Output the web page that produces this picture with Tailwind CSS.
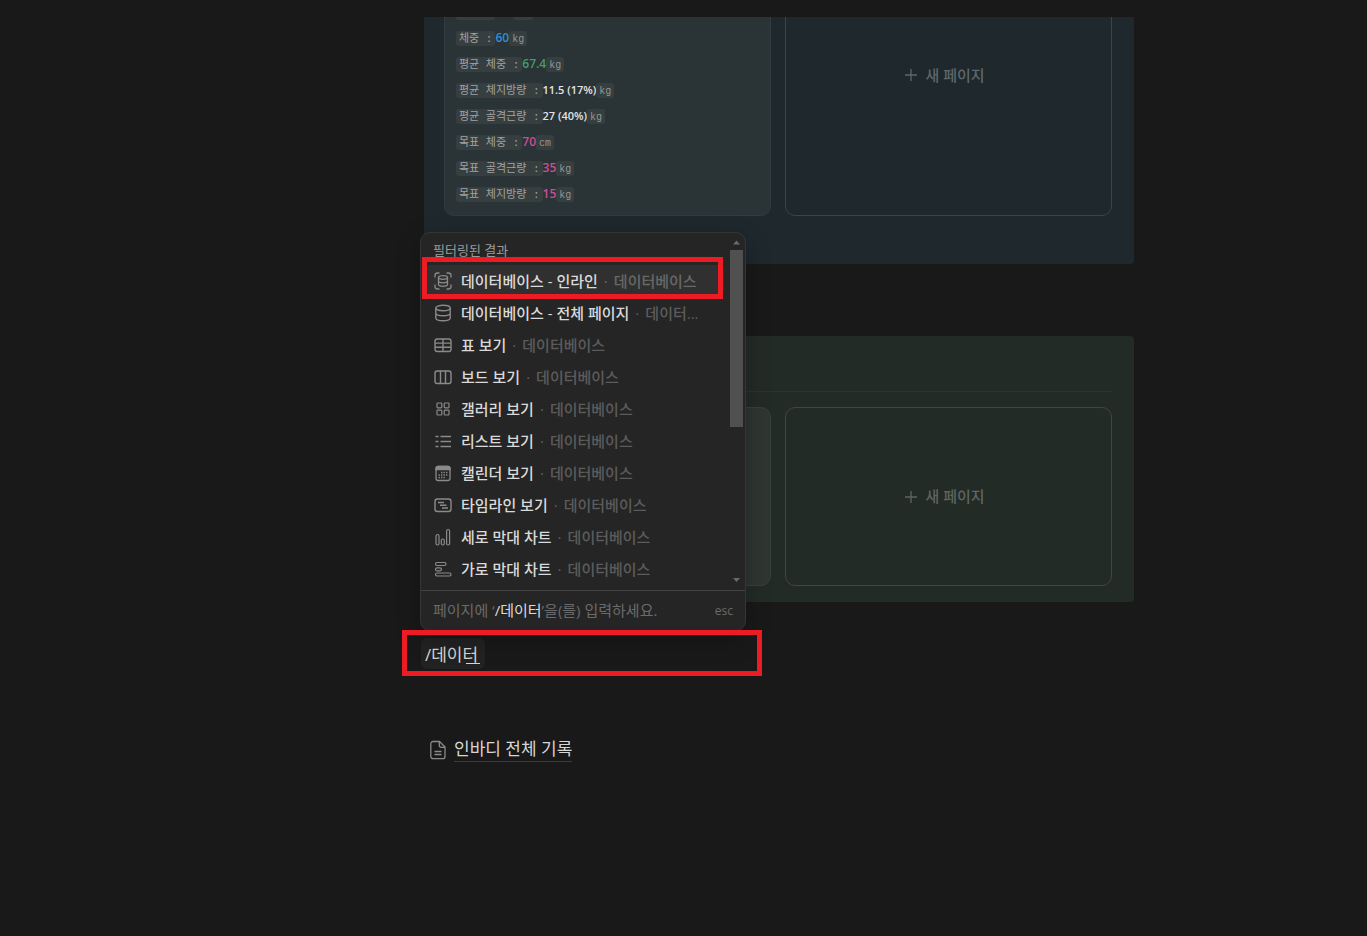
<!DOCTYPE html>
<html lang="ko">
<head>
<meta charset="utf-8">
<meta name="viewport" content="width=device-width, initial-scale=1">
<title>인바디 기록</title>
<script src="https://cdn.jsdelivr.net/npm/@tailwindcss/browser@4"></script>
</head>
<body class="min-h-screen bg-[#191919] font-['Open_Sans','Noto_Sans_CJK_KR',sans-serif] text-[#d6d6d6]">
<main class="pt-[17px] pr-[233px] pl-[424px]">

  <section class="overflow-hidden rounded-b-sm bg-[#1e282d] pr-[22px] pb-12 pl-5">
    <div class="-mt-[83px] grid h-[282px] grid-cols-2 gap-3.5">
      <article class="flex flex-col justify-end rounded-[10px] border border-[#323c40] bg-[#2a3437] px-[11px] pb-2 text-[12px] font-semibold">
        <div class="flex h-[26px] items-center"><span class="h-[15px] w-[39px] rounded-[3px] bg-[#363e40]"></span><span class="w-[18px]"></span><span class="h-[15px] w-5 rounded-[3px] bg-[#363e40]"></span></div>
        <div class="flex h-[26px] items-center whitespace-nowrap"><code class="h-[15px] rounded-[3px] bg-[#363e40] px-[3px] font-['Liberation_Mono','Noto_Sans_CJK_KR',monospace] text-[11px] leading-[17px] font-normal text-[#a0a3a3]">체중 :</code><span class="text-[#2f8fd0]">60</span><code class="h-[15px] rounded-[3px] bg-[#363e40] px-[3px] font-['Liberation_Mono',monospace] text-[10px] leading-[17px] font-normal text-[#929696]">kg</code></div>
        <div class="flex h-[26px] items-center whitespace-nowrap"><code class="h-[15px] rounded-[3px] bg-[#363e40] px-[3px] font-['Liberation_Mono','Noto_Sans_CJK_KR',monospace] text-[11px] leading-[17px] font-normal text-[#a0a3a3]">평균 체중 :</code><span class="text-[#469a69]">67.4</span><code class="h-[15px] rounded-[3px] bg-[#363e40] px-[3px] font-['Liberation_Mono',monospace] text-[10px] leading-[17px] font-normal text-[#929696]">kg</code></div>
        <div class="flex h-[26px] items-center whitespace-nowrap"><code class="h-[15px] rounded-[3px] bg-[#363e40] px-[3px] font-['Liberation_Mono','Noto_Sans_CJK_KR',monospace] text-[11px] leading-[17px] font-normal text-[#a0a3a3]">평균 체지방량 :</code><span class="text-[11px] text-[#e2e4e4]">11.5 (17%)</span><code class="h-[15px] rounded-[3px] bg-[#363e40] px-[3px] font-['Liberation_Mono',monospace] text-[10px] leading-[17px] font-normal text-[#929696]">kg</code></div>
        <div class="flex h-[26px] items-center whitespace-nowrap"><code class="h-[15px] rounded-[3px] bg-[#363e40] px-[3px] font-['Liberation_Mono','Noto_Sans_CJK_KR',monospace] text-[11px] leading-[17px] font-normal text-[#a0a3a3]">평균 골격근량 :</code><span class="text-[11px] text-[#e2e4e4]">27 (40%)</span><code class="h-[15px] rounded-[3px] bg-[#363e40] px-[3px] font-['Liberation_Mono',monospace] text-[10px] leading-[17px] font-normal text-[#929696]">kg</code></div>
        <div class="flex h-[26px] items-center whitespace-nowrap"><code class="h-[15px] rounded-[3px] bg-[#363e40] px-[3px] font-['Liberation_Mono','Noto_Sans_CJK_KR',monospace] text-[11px] leading-[17px] font-normal text-[#a0a3a3]">목표 체중 :</code><span class="text-[#cd4e92]">70</span><code class="h-[15px] rounded-[3px] bg-[#363e40] px-[3px] font-['Liberation_Mono',monospace] text-[10px] leading-[17px] font-normal text-[#929696]">cm</code></div>
        <div class="flex h-[26px] items-center whitespace-nowrap"><code class="h-[15px] rounded-[3px] bg-[#363e40] px-[3px] font-['Liberation_Mono','Noto_Sans_CJK_KR',monospace] text-[11px] leading-[17px] font-normal text-[#a0a3a3]">목표 골격근량 :</code><span class="text-[#cd4e92]">35</span><code class="h-[15px] rounded-[3px] bg-[#363e40] px-[3px] font-['Liberation_Mono',monospace] text-[10px] leading-[17px] font-normal text-[#929696]">kg</code></div>
        <div class="flex h-[26px] items-center whitespace-nowrap"><code class="h-[15px] rounded-[3px] bg-[#363e40] px-[3px] font-['Liberation_Mono','Noto_Sans_CJK_KR',monospace] text-[11px] leading-[17px] font-normal text-[#a0a3a3]">목표 체지방량 :</code><span class="text-[#cd4e92]">15</span><code class="h-[15px] rounded-[3px] bg-[#363e40] px-[3px] font-['Liberation_Mono',monospace] text-[10px] leading-[17px] font-normal text-[#929696]">kg</code></div>
      </article>
      <button type="button" class="flex items-center justify-center gap-2 rounded-[10px] border border-[#3b4448] pr-[7px] text-[15px] font-medium text-[#5e676b]">
        <svg class="size-3" viewBox="0 0 12 12" stroke="currentColor" stroke-width="1.3" aria-hidden="true"><path d="M6 0v12M0 6h12"/></svg>새 페이지
      </button>
    </div>
  </section>

  <section class="mt-[72px] rounded-sm bg-[#232b27] pr-[22px] pb-4 pl-5">
    <div class="h-14 border-b border-[#332f2c]"></div>
    <div class="mt-[15px] grid h-[179px] grid-cols-2 gap-3.5">
      <article class="rounded-[10px] border border-[#38403c] bg-[#2e3632]"></article>
      <button type="button" class="flex items-center justify-center gap-2 rounded-[10px] border border-[#404643] pr-[7px] text-[15px] font-medium text-[#5f6562]">
        <svg class="size-3" viewBox="0 0 12 12" stroke="currentColor" stroke-width="1.3" aria-hidden="true"><path d="M6 0v12M0 6h12"/></svg>새 페이지
      </button>
    </div>
  </section>

  <div class="relative mt-9 -ml-[3px]">
    <div class="relative w-16">
      <input type="text" aria-label="명령어" value="/데이터" class="block h-[31px] w-full rounded-md bg-[#222222] px-1 text-[17px] text-[#d6d6d6] outline-none">
      <span class="absolute right-[5px] bottom-[5px] h-px w-3.5 bg-[#d6d6d6]"></span>
    </div>

    <div class="absolute bottom-full -left-px mb-[7px] w-[326px] overflow-hidden rounded-[10px] border border-[#343636] bg-[#252525] shadow-[0_8px_24px_rgba(0,0,0,0.25)]">
      <div class="flex h-[357px]">
        <div class="min-w-0 flex-1 pl-[3px]">
          <h2 class="flex h-8 items-center px-[9px] pt-1 text-[13px] text-[#9b9b9b]">필터링된 결과</h2>
          <ul class="text-[15px] font-medium text-[#dadada]">
            <li><button type="button" class="flex h-8 w-full items-center gap-2 rounded-md bg-[#303030] pr-4 pl-[9px] text-left">
              <svg class="size-5 shrink-0 text-[#8a8a8a]" viewBox="0 0 20 20" fill="none" stroke="currentColor" stroke-width="1.3" stroke-linecap="round" aria-hidden="true"><path d="M6 2H4.500A2.500 2.500 0 0 0 2 4.500V6M14 2h1.500A2.500 2.500 0 0 1 18 4.500V6M6 18H4.500A2.500 2.500 0 0 1 2 15.500V14M14 18h1.500a2.500 2.500 0 0 0 2.500-2.500V14"/><ellipse cx="10" cy="6.500" rx="4.500" ry="1.800"/><path d="M5.500 6.500v7c0 1 2 1.800 4.500 1.800s4.500-.8 4.500-1.800v-7M5.500 10c0 1 2 1.800 4.500 1.800s4.500-.8 4.500-1.800"/></svg>
              <span class="truncate leading-5">데이터베이스 - 인라인<span class="inline-block w-4 text-center text-[#6a6a6a]">·</span><span class="text-[#686868]">데이터베이스</span></span></button></li>
            <li><button type="button" class="flex h-8 w-full items-center gap-2 pr-4 pl-[9px] text-left">
              <svg class="size-5 shrink-0 text-[#8a8a8a]" viewBox="0 0 20 20" fill="none" stroke="currentColor" stroke-width="1.4" aria-hidden="true"><ellipse cx="10" cy="5" rx="7.200" ry="2.700"/><path d="M2.800 5v10c0 1.500 3.200 2.700 7.200 2.700s7.200-1.200 7.200-2.700V5M2.800 10c0 1.500 3.200 2.700 7.200 2.700s7.200-1.200 7.200-2.700"/></svg>
              <span class="whitespace-nowrap leading-5">데이터베이스 - 전체 페이지<span class="inline-block w-4 text-center text-[#5c5c5c]">·</span><span class="text-[#5c5c5c]">데이터...</span></span></button></li>
            <li><button type="button" class="flex h-8 w-full items-center gap-2 pr-4 pl-[9px] text-left">
              <svg class="size-5 shrink-0 text-[#8a8a8a]" viewBox="0 0 20 20" fill="none" stroke="currentColor" stroke-width="1.4" aria-hidden="true"><rect x="2" y="4" width="16" height="12.500" rx="2.200"/><path d="M2 8.100h16M2 12.200h16M10 4v12.500"/></svg>
              <span class="truncate leading-5">표 보기<span class="inline-block w-4 text-center text-[#5c5c5c]">·</span><span class="text-[#5c5c5c]">데이터베이스</span></span></button></li>
            <li><button type="button" class="flex h-8 w-full items-center gap-2 pr-4 pl-[9px] text-left">
              <svg class="size-5 shrink-0 text-[#8a8a8a]" viewBox="0 0 20 20" fill="none" stroke="currentColor" stroke-width="1.4" aria-hidden="true"><rect x="2" y="4" width="16" height="12.500" rx="2.200"/><path d="M7.500 4v12.500M12.500 4v12.500"/></svg>
              <span class="truncate leading-5">보드 보기<span class="inline-block w-4 text-center text-[#5c5c5c]">·</span><span class="text-[#5c5c5c]">데이터베이스</span></span></button></li>
            <li><button type="button" class="flex h-8 w-full items-center gap-2 pr-4 pl-[9px] text-left">
              <svg class="size-5 shrink-0 text-[#8a8a8a]" viewBox="0 0 20 20" fill="none" stroke="currentColor" stroke-width="1.200" aria-hidden="true"><rect x="4" y="4" width="4.800" height="4.800" rx=".8"/><rect x="11.200" y="4" width="4.800" height="4.800" rx=".8"/><rect x="4" y="11.200" width="4.800" height="4.800" rx=".8"/><rect x="11.200" y="11.200" width="4.800" height="4.800" rx=".8"/></svg>
              <span class="truncate leading-5">갤러리 보기<span class="inline-block w-4 text-center text-[#5c5c5c]">·</span><span class="text-[#5c5c5c]">데이터베이스</span></span></button></li>
            <li><button type="button" class="flex h-8 w-full items-center gap-2 pr-4 pl-[9px] text-left">
              <svg class="size-5 shrink-0 text-[#8a8a8a]" viewBox="0 0 20 20" fill="none" stroke="currentColor" stroke-width="1.500" aria-hidden="true"><path d="M2.500 5.500h3M7.500 5.500H18M2.500 10.500h3M7.500 10.500H18M2.500 15.500h3M7.500 15.500H18"/></svg>
              <span class="truncate leading-5">리스트 보기<span class="inline-block w-4 text-center text-[#5c5c5c]">·</span><span class="text-[#5c5c5c]">데이터베이스</span></span></button></li>
            <li><button type="button" class="flex h-8 w-full items-center gap-2 pr-4 pl-[9px] text-left">
              <svg class="size-5 shrink-0 text-[#8a8a8a]" viewBox="0 0 20 20" fill="none" stroke="currentColor" stroke-width="1.300" aria-hidden="true"><rect x="3" y="3.500" width="14" height="14" rx="2.200"/><path d="M3 6.500V5.500a2 2 0 0 1 2-2h10a2 2 0 0 1 2 2v1z" fill="currentColor"/><path d="M8 9.500h7M5.500 12h9.500M5.500 14.500h6.500" stroke-width="1.400" stroke-dasharray="1.400 1.100"/></svg>
              <span class="truncate leading-5">캘린더 보기<span class="inline-block w-4 text-center text-[#5c5c5c]">·</span><span class="text-[#5c5c5c]">데이터베이스</span></span></button></li>
            <li><button type="button" class="flex h-8 w-full items-center gap-2 pr-4 pl-[9px] text-left">
              <svg class="size-5 shrink-0 text-[#8a8a8a]" viewBox="0 0 20 20" fill="none" stroke="currentColor" stroke-width="1.400" aria-hidden="true"><rect x="2" y="4" width="16" height="12.500" rx="2.500"/><path d="M5 7.500h6M7 10.200h6.500M9 13h6"/></svg>
              <span class="truncate leading-5">타임라인 보기<span class="inline-block w-4 text-center text-[#5c5c5c]">·</span><span class="text-[#5c5c5c]">데이터베이스</span></span></button></li>
            <li><button type="button" class="flex h-8 w-full items-center gap-2 pr-4 pl-[9px] text-left">
              <svg class="size-5 shrink-0 text-[#8a8a8a]" viewBox="0 0 20 20" fill="none" stroke="currentColor" stroke-width="1.200" aria-hidden="true"><rect x="3" y="7.500" width="3" height="10.500" rx="1.500"/><rect x="8.300" y="12" width="3" height="6" rx="1.500"/><rect x="13.600" y="2.500" width="3" height="15.500" rx="1.500"/></svg>
              <span class="truncate leading-5">세로 막대 차트<span class="inline-block w-4 text-center text-[#5c5c5c]">·</span><span class="text-[#5c5c5c]">데이터베이스</span></span></button></li>
            <li><button type="button" class="flex h-8 w-full items-center gap-2 pr-4 pl-[9px] text-left">
              <svg class="size-5 shrink-0 text-[#8a8a8a]" viewBox="0 0 20 20" fill="none" stroke="currentColor" stroke-width="1.200" aria-hidden="true"><rect x="2.500" y="3.500" width="10.500" height="3" rx="1.500"/><rect x="2.500" y="8.800" width="6" height="3" rx="1.500"/><rect x="2.500" y="14" width="15.500" height="3" rx="1.500"/></svg>
              <span class="truncate leading-5">가로 막대 차트<span class="inline-block w-4 text-center text-[#5c5c5c]">·</span><span class="text-[#5c5c5c]">데이터베이스</span></span></button></li>
          </ul>
        </div>
        <div class="ml-1.5 flex w-[15px] flex-col items-start pr-0.5 pt-px" aria-hidden="true">
          <svg class="h-4 w-[13px] text-[#6a6a6a]" viewBox="0 0 13 16" fill="currentColor"><path d="M3 10.500h7L6.500 6.500z"/></svg>
          <div class="h-[177px] w-[13px] bg-[#505050]"></div>
          <svg class="mt-auto h-4 w-[13px] text-[#6a6a6a]" viewBox="0 0 13 16" fill="currentColor"><path d="M3 4h7L6.500 8z"/></svg>
        </div>
      </div>
      <div class="flex h-10 items-center justify-between border-t border-[#424242] px-3 text-[15px] text-[#6a6a6a]">
        <p class="whitespace-nowrap">페이지에 ‘<span class="text-[#dadada]">/데이터</span>’을(를) 입력하세요.</p><kbd class="font-['Open_Sans',sans-serif] text-[12px] font-medium">esc</kbd>
      </div>
    </div>

    <!-- Highlight frames over the selected item and the typed command -->
    <div class="pointer-events-none absolute bottom-full left-px mb-[339px] h-[42px] w-[301px] border-5 border-[#ed1c24]"></div>
    <div class="pointer-events-none absolute -top-2 -left-[19px] h-[46px] w-[360px] border-5 border-[#ed1c24]"></div>
  </div>

  <a href="#" class="mt-[68px] ml-1 flex items-center gap-1.5 text-[17px]">
    <svg class="size-5 text-[#8a8a8a]" viewBox="0 0 20 20" fill="none" stroke="currentColor" stroke-width="1.300" stroke-linejoin="round" aria-hidden="true"><path d="M5 1.500h6.500L17 7v9.500a2.200 2.200 0 0 1-2.200 2.200H5a2.200 2.200 0 0 1-2.200-2.200V3.700A2.200 2.200 0 0 1 5 1.500zM11.300 1.500v3.800a2 2 0 0 0 2 2H17M6.500 11.500h7M6.500 14.500h7"/></svg>
    <span class="border-b border-[#3c3c3c] leading-6">인바디 전체 기록</span>
  </a>
</main>
</body>
</html>
